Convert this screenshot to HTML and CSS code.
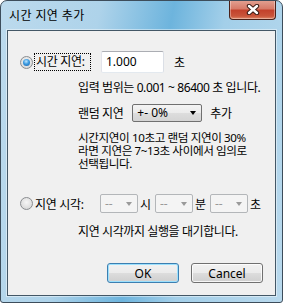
FILE: index.html
```html
<!DOCTYPE html>
<html>
<head>
<title>시간 지연 추가</title>
<link rel="stylesheet" href="styles.css">
</head>
<body>

<div class="window">
	<div class="titlebar">
		<span class="title">시간 지연 추가</span>
		<span class="close">
			<svg width="14" height="11" viewBox="0 0 14 11">
				<path d="M3 2 L11 9 M11 2 L3 9" stroke="#3a1c16" stroke-width="4.4" stroke-linecap="round"/>
				<path d="M3 2 L11 9 M11 2 L3 9" stroke="#ffffff" stroke-width="2.4" stroke-linecap="round"/>
			</svg>
		</span>
	</div><!-- end titlebar -->

	<div class="client">
		<div class="row">
			<span class="radio checked"></span>
			<span class="focus-label">시간 지연:</span>
			<span class="textbox">1.000</span>
			<span class="unit">초</span>
		</div>

		<div class="indent range">입력 범위는 0.001 ~ 86400 초 입니다.</div>

		<div class="indent random">
			<span>랜덤 지연</span>
			<span class="combo">+- 0%<i class="arrow"></i></span>
			<span class="after">추가</span>
		</div>

		<p class="indent note">시간지연이 10초고 랜덤 지연이 30%<br>라면 지연은 7~13초 사이에서 임의로<br>선택됩니다.</p>

		<div class="row time">
			<span class="radio"></span>
			<span class="time-label">지연 시각:</span>
			<span class="combo off">--<i class="arrow"></i></span><span class="sep">시</span>
			<span class="combo off">--<i class="arrow"></i></span><span class="sep">분</span>
			<span class="combo off">--<i class="arrow"></i></span><span class="sep">초</span>
		</div>

		<div class="indent wait">지연 시각까지 실행을 대기합니다.</div>

		<div class="buttons">
			<button class="btn default">OK</button>
			<button class="btn">Cancel</button>
		</div>
	</div><!-- end client -->
</div><!-- end window -->

</body>
</html>
```

FILE: styles.css
```css
body {
margin: 0;
font-family: "Noto Sans", "Noto Sans CJK KR", sans-serif;
font-size: 12px;
color: #000;
}

.window {
width: 283px;
height: 303px;
box-sizing: border-box;
border: 1px solid #3d4d5b;
border-radius: 7px 7px 3px 3px;
background: linear-gradient(100deg, #bcdaed 0%, #aed3ea 30%, #6db4dd 52%, #a3cfe9 68%, #b9d9ed 100%);
display: flex;
flex-direction: column;
overflow: hidden;
}

.titlebar {
height: 29px;
flex: none;
display: flex;
justify-content: space-between;
align-items: flex-start;
}

.title {
margin: 7px 0 0 8px;
line-height: 16px;
font-size: 12px;
letter-spacing: 0.4px;
}

.close {
width: 47px;
height: 20px;
margin: -1px 6px 0 0;
box-sizing: border-box;
border: 1px solid #4a2018;
border-top: none;
border-radius: 0 0 4px 4px;
background: linear-gradient(to bottom, #e3a394 0%, #d77b69 45%, #c3422c 55%, #c9553b 85%, #e08a6a 100%);
box-shadow: inset 0 0 0 1px rgba(255,255,255,0.35);
display: flex;
align-items: center;
justify-content: center;
}

.client {
flex: none;
height: 266px;
margin: 0 6px;
box-sizing: border-box;
border: 1px solid #435766;
background: #f0f0f0;
padding: 20px 12px 0 12px;
box-shadow: 0 0 0 1px rgba(255,255,255,0.45);
}

.row {
display: flex;
align-items: center;
height: 22px;
}

.radio {
width: 11px;
height: 11px;
border-radius: 50%;
border: 1px solid #8a8d90;
background: radial-gradient(circle at 50% 40%, #f6f6f6 0%, #dcdcdc 70%, #cfcfcf 100%);
flex: none;
display: flex;
align-items: center;
justify-content: center;
}

.radio.checked::after {
content: "";
width: 7px;
height: 7px;
border-radius: 50%;
background: radial-gradient(circle at 45% 35%, #bfe6ff 0%, #3a9ae0 45%, #1b5fa8 100%);
}

.focus-label {
width: 54px;
height: 16px;
line-height: 16px;
margin-left: 1px;
padding-left: 1px;
border: 1px dotted #000;
flex: none;
white-space: nowrap;
letter-spacing: -0.3px;
}

.textbox {
width: 63px;
height: 22px;
margin-left: 10px;
box-sizing: border-box;
border: 1px solid #abadb3;
border-color: #abadb3 #dbdfe6 #e3e9ef #e2e3ea;
border-radius: 2px;
background: #fff;
padding-left: 4px;
line-height: 20px;
flex: none;
}

.unit {
margin-left: 10px;
}

.indent {
margin-left: 58px;
white-space: nowrap;
letter-spacing: -0.4px;
}

.range {
margin-top: 8px;
line-height: 14px;
}

.random {
margin-top: 9px;
display: flex;
align-items: center;
height: 18px;
}

.combo {
position: relative;
width: 70px;
height: 18px;
margin-left: 9px;
box-sizing: border-box;
border: 1px solid #707070;
border-radius: 2px;
background: linear-gradient(to bottom, #f4f4f4 0%, #ebebeb 50%, #dddddd 51%, #d4d4d4 100%);
padding-left: 4px;
line-height: 16px;
flex: none;
letter-spacing: 0;
}

.arrow {
position: absolute;
right: 5px;
top: 6px;
width: 0;
height: 0;
border-left: 3.5px solid transparent;
border-right: 3.5px solid transparent;
border-top: 4px solid #000;
}

.after {
margin-left: 8px;
}

.note {
margin-top: 9px;
margin-bottom: 0;
font-size: 11.6px;
line-height: 13px;
}

.time {
margin-top: 24px;
height: 19px;
}

.time-label {
width: 65px;
margin-left: 2px;
flex: none;
letter-spacing: -0.3px;
}

.combo.off {
width: 38px;
height: 19px;
margin-left: 0;
border-color: #b3b6b9;
background: #f4f4f4;
color: #9a9a9a;
line-height: 17px;
}

.combo.off .arrow {
top: 7px;
border-top-color: #9a9a9a;
}

.sep {
width: 17px;
padding-left: 2px;
box-sizing: border-box;
flex: none;
}

.wait {
margin-top: 12px;
line-height: 14px;
}

.buttons {
margin-top: 24px;
display: flex;
justify-content: flex-end;
gap: 12px;
}

.btn {
width: 72px;
height: 20px;
padding: 0;
font-family: "Noto Sans", sans-serif;
font-size: 12px;
color: #000;
border: 1px solid #707070;
border-radius: 3px;
background: linear-gradient(to bottom, #f2f2f2 0%, #ebebeb 50%, #dddddd 51%, #cfcfcf 100%);
box-shadow: inset 0 0 0 1px rgba(255,255,255,0.8);
}

.btn.default {
border-color: #3c7fb1;
box-shadow: inset 0 0 0 1px #9ce0fd;
}
```
